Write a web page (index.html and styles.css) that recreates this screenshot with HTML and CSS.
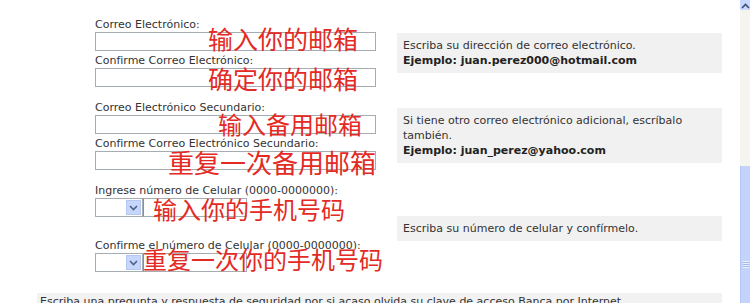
FILE: index.html
```html
<!DOCTYPE html>
<html lang="es">
<head>
    <meta charset="UTF-8">
    <title>Datos de contacto</title>
    <link rel="stylesheet" href="styles.css">
</head>
<body>
    <div class="pagina">
        <div class="formulario">
            <!-- Correo principal -->
            <div class="fila">
                <div class="campos">
                    <div class="campo">
                        <label>Correo Electrónico:</label>
                        <input class="texto" type="text">
                        <span class="marca m1">输入你的邮箱</span>
                    </div>
                    <div class="campo">
                        <label>Confirme Correo Electrónico:</label>
                        <input class="texto" type="text">
                        <span class="marca m2">确定你的邮箱</span>
                    </div>
                </div>
                <div class="ayuda">
                    Escriba su dirección de correo electrónico.<br>
                    <b>Ejemplo: juan.perez000@hotmail.com</b>
                </div>
            </div>

            <!-- Correo secundario -->
            <div class="fila">
                <div class="campos">
                    <div class="campo">
                        <label>Correo Electrónico Secundario:</label>
                        <input class="texto" type="text">
                        <span class="marca m3">输入备用邮箱</span>
                    </div>
                    <div class="campo">
                        <label>Confirme Correo Electrónico Secundario:</label>
                        <input class="texto" type="text">
                        <span class="marca m4">重复一次备用邮箱</span>
                    </div>
                </div>
                <div class="ayuda">
                    Si tiene otro correo electrónico adicional, escríbalo también.<br>
                    <b>Ejemplo: juan_perez@yahoo.com</b>
                </div>
            </div>

            <!-- Celular -->
            <div class="fila">
                <div class="campos">
                    <div class="campo">
                        <label>Ingrese número de Celular (0000-0000000):</label>
                        <div class="celular primero">
                            <div class="combo">
                                <select></select>
                                <span class="flecha"><svg width="9" height="6" viewBox="0 0 9 6"><path d="M1 1l3.5 3.5L8 1" fill="none" stroke="#4d6185" stroke-width="1.6"/></svg></span>
                            </div>
                            <input class="numero" type="text">
                        </div>
                        <span class="marca m5">输入你的手机号码</span>
                    </div>
                    <div class="campo">
                        <label>Confirme el número de Celular (0000-0000000):</label>
                        <div class="celular">
                            <div class="combo">
                                <select></select>
                                <span class="flecha"><svg width="9" height="6" viewBox="0 0 9 6"><path d="M1 1l3.5 3.5L8 1" fill="none" stroke="#4d6185" stroke-width="1.6"/></svg></span>
                            </div>
                            <input class="numero" type="text">
                        </div>
                        <span class="marca m6">重复一次你的手机号码</span>
                    </div>
                </div>
                <div class="ayuda">
                    Escriba su número de celular y confírmelo.
                </div>
            </div>

            <div class="nota">
                Escriba una pregunta y respuesta de seguridad por si acaso olvida su clave de acceso Banca por Internet.
            </div>
        </div>
    </div>

    <div class="barra">
        <div class="boton"><svg width="9" height="9" viewBox="0 0 9 9"><path d="M1 7l3.5-3.5L8 7" fill="none" stroke="#3d4f7a" stroke-width="1.6"/></svg></div>
        <div class="pista"></div>
        <div class="pulgar"><span class="agarre"></span></div>
    </div>
</body>
</html>
```
FILE: styles.css
```css
body {
    margin: 0;
    height: 303px;
    overflow: hidden;
    display: flex;
    background: #fff;
    font-family: "DejaVu Sans", Verdana, sans-serif;
    font-size: 11px;
    color: #333;
}

.pagina {
    flex: 1;
    padding-top: 11px;
}

.formulario {
    width: 722px;
}

.fila {
    display: flex;
    align-items: center;
    padding: 7px 0;
}

.campos {
    width: 302px;
    padding-left: 95px;
}

.campo {
    position: relative;
}

.campo label {
    display: block;
    line-height: 14px;
}

.texto {
    display: block;
    width: 281px;
    height: 19px;
    box-sizing: border-box;
    margin: 0 0 3px;
    border: 1px solid #a5acb2;
    background: #fff;
}

.campo + .campo .texto {
    margin-bottom: 0;
}

.celular {
    display: flex;
    height: 19px;
}

.celular.primero {
    margin-bottom: 22px;
}

.combo {
    display: flex;
    width: 48px;
    box-sizing: border-box;
    border: 1px solid #a5acb2;
    padding: 1px;
    background: #fff;
}

.combo select {
    flex: 1;
    min-width: 0;
    border: none;
    background: #fff;
    appearance: none;
    padding: 0;
}

.flecha {
    width: 15px;
    display: flex;
    align-items: center;
    justify-content: center;
    background: #c6d6fc;
    border: 1px solid #b4c6f2;
    box-sizing: border-box;
}

.numero {
    width: 104px;
    height: 19px;
    box-sizing: border-box;
    margin: 0;
    border: 1px solid #a5acb2;
    border-left: 1px solid #8b8f96;
    background: #fff;
}

.ayuda {
    width: 313px;
    padding: 5px 6px;
    background: #f1f1f1;
    line-height: 15px;
}

.ayuda b {
    color: #222;
}

.nota {
    width: 679px;
    margin: 14px 0 0 37px;
    padding: 1px 3px;
    background: #f2f2f2;
    line-height: 15px;
}

/* anotaciones en rojo sobre el formulario */
.marca {
    position: absolute;
    color: #e42a24;
    font-family: "Noto Sans CJK SC", sans-serif;
    line-height: 1;
    white-space: nowrap;
    pointer-events: none;
}

.m1 { left: 113px; top: 8px; font-size: 25px; }
.m2 { left: 113px; top: 12px; font-size: 25px; }
.m3 { left: 123px; top: 11px; font-size: 24px; }
.m4 { left: 73px; top: 12px; font-size: 26px; }
.m5 { left: 58px; top: 13px; font-size: 24px; }
.m6 { left: 48px; top: 8px; font-size: 24px; }

/* barra de desplazamiento */
.barra {
    width: 10px;
    display: flex;
    flex-direction: column;
    background: #f5f4ee;
}

.boton {
    height: 10px;
    display: flex;
    align-items: flex-end;
    justify-content: center;
    background: #c9d8fc;
    overflow: hidden;
}

.pista {
    height: 156px;
}

.pulgar {
    flex: 1;
    background: #c3d3fc;
    border-left: 1px solid #b3c6f4;
    display: flex;
    justify-content: center;
    padding-top: 95px;
}

.agarre {
    width: 6px;
    height: 7px;
    background: repeating-linear-gradient(#eef3fe 0 1px, #9fb6ee 1px 2px);
}
```
